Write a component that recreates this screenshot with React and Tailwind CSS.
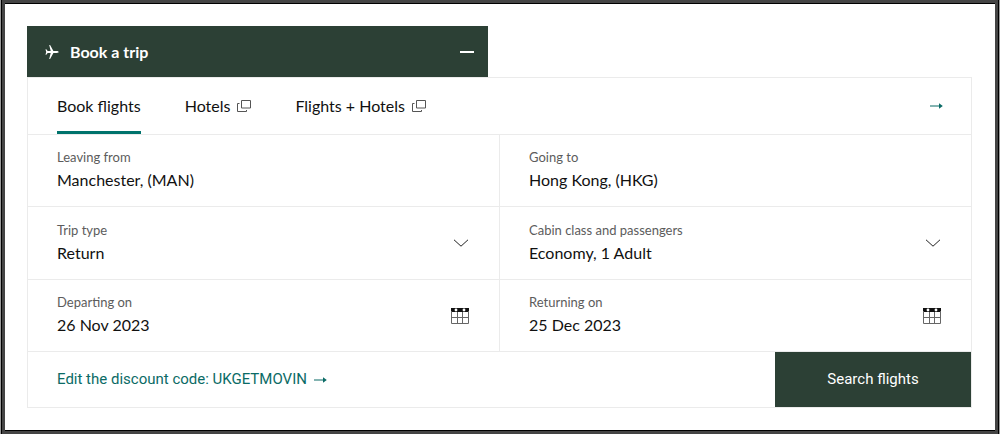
import React from "react";

function PlaneIcon() {
  return (
    <svg viewBox="0 0 14 16" className="h-4 w-3.5 shrink-0" fill="currentColor" aria-hidden="true">
      <path d="M13.6 8c0-.6-.9-.9-1.900-.9H8.400L5.100.9H4.200l1.500 6.200H2.700L1.300 5.200H.5l.7 2.800-.7 2.800h.8l1.400-1.900h3l-1.500 6.200h.9l3.300-6.200h3.300c1 0 1.900-.3 1.900-.9z" />
    </svg>
  );
}

function WindowIcon() {
  return (
    <svg viewBox="0 0 14 12" className="h-3 w-3.5 shrink-0 text-[#555]" fill="none" stroke="currentColor" aria-hidden="true">
      <path d="M4.500.5h9v7.500h-9zM2.500 3.500h-2v8h9v-1.500" />
    </svg>
  );
}

function ArrowIcon() {
  return (
    <svg viewBox="0 0 13 8" className="h-2 w-[13px] shrink-0" fill="currentColor" aria-hidden="true">
      <path d="M0 3.500h9V1.200L12.800 4 9 6.800V4.500H0z" />
    </svg>
  );
}

function ChevronIcon() {
  return (
    <svg viewBox="0 0 16 8" className="h-2 w-4" fill="none" stroke="#222" aria-hidden="true">
      <path d="M1 .8 8 7.200 15 .8" />
    </svg>
  );
}

function CalendarIcon() {
  return (
    <svg viewBox="0 0 18 18" className="size-[18px]" fill="none" aria-hidden="true">
      <path d="M0 1h18v4H0z" fill="#111" />
      <path d="M.5 4v12.500h17V4M.5 10.500h17M6.500 5v11.500M11.500 5v11.500" stroke="#666" />
      <circle cx="5" cy="3" r="1.400" fill="#fff" />
      <circle cx="13" cy="3" r="1.400" fill="#fff" />
    </svg>
  );
}

const valueStyle =
  "block w-full appearance-none bg-transparent p-0 text-base leading-6 text-[#111] outline-none";

function Field({ id, label, icon, children }) {
  return (
    <div className="flex items-center bg-white pr-[30px] pl-[29px]">
      <div className="flex min-w-0 flex-1 flex-col pt-[11px] pb-3.5">
        <label htmlFor={id} className="text-[13px] leading-[22px] text-[#5c5c5c]">
          {label}
        </label>
        {children}
      </div>
      {icon}
    </div>
  );
}

function TextField({ id, label, value }) {
  return (
    <Field id={id} label={label}>
      <input id={id} type="text" defaultValue={value} className={valueStyle} />
    </Field>
  );
}

function SelectField({ id, label, value }) {
  return (
    <Field id={id} label={label} icon={<ChevronIcon />}>
      <select id={id} defaultValue={value} className={valueStyle}>
        <option>{value}</option>
      </select>
    </Field>
  );
}

function DateField({ id, label, value }) {
  return (
    <Field
      id={id}
      label={label}
      icon={
        <button type="button" aria-label={label}>
          <CalendarIcon />
        </button>
      }
    >
      <input id={id} type="text" defaultValue={value} className={valueStyle} />
    </Field>
  );
}

export default function App() {
  return (
    <div className="border-x border-[#999] font-['Lato',sans-serif] text-[#111]">
      <div className="border-x border-black">
        <div className="border-x-[3px] border-t-[3px] border-b-4 border-[#444] bg-white">
          <main className="border-y border-black pt-[22px] pr-[23px] pb-[22px] pl-[22px]">
            <button
              type="button"
              aria-expanded="true"
              className="flex h-[51px] w-full max-w-[461px] items-center gap-[11px] bg-[#2c4035] pr-3.5 pl-[18px] text-base font-bold text-white"
            >
              <PlaneIcon />
              <span className="flex-1 text-left">Book a trip</span>
              <span className="h-0.5 w-3.5 bg-white" />
            </button>

            <form className="border border-[#ebebeb]" onSubmit={(e) => e.preventDefault()}>
              <nav className="flex h-14 items-stretch pr-7 pl-[29px] text-base">
                <button type="button" className="mr-11 border-b-[3px] border-[#00736c] pt-[3px]">
                  Book flights
                </button>
                <a href="#hotels" className="mr-11 flex items-center gap-[7px]">
                  Hotels <WindowIcon />
                </a>
                <a href="#packages" className="flex items-center gap-[7px]">
                  Flights + Hotels <WindowIcon />
                </a>
                <button type="button" aria-label="More" className="ml-auto text-[#0b6b66]">
                  <ArrowIcon />
                </button>
              </nav>

              <div className="grid grid-cols-2 grid-rows-[71px_72px_71px] gap-px border-y border-[#ebebeb] bg-[#ebebeb]">
                <TextField id="from" label="Leaving from" value="Manchester, (MAN)" />
                <TextField id="to" label="Going to" value="Hong Kong, (HKG)" />
                <SelectField id="trip" label="Trip type" value="Return" />
                <SelectField id="cabin" label="Cabin class and passengers" value="Economy, 1 Adult" />
                <DateField id="depart" label="Departing on" value="26 Nov 2023" />
                <DateField id="return" label="Returning on" value="25 Dec 2023" />
              </div>

              <div className="flex h-[55px] items-stretch justify-between pl-[29px] font-['Roboto',sans-serif] text-[15px]">
                <a href="#discount" className="flex items-center gap-[7px] text-[#0b6b66]">
                  Edit the discount code: UKGETMOVIN <ArrowIcon />
                </a>
                <button type="submit" className="w-[196px] bg-[#2c4035] text-white">
                  Search flights
                </button>
              </div>
            </form>
          </main>
        </div>
      </div>
    </div>
  );
}
